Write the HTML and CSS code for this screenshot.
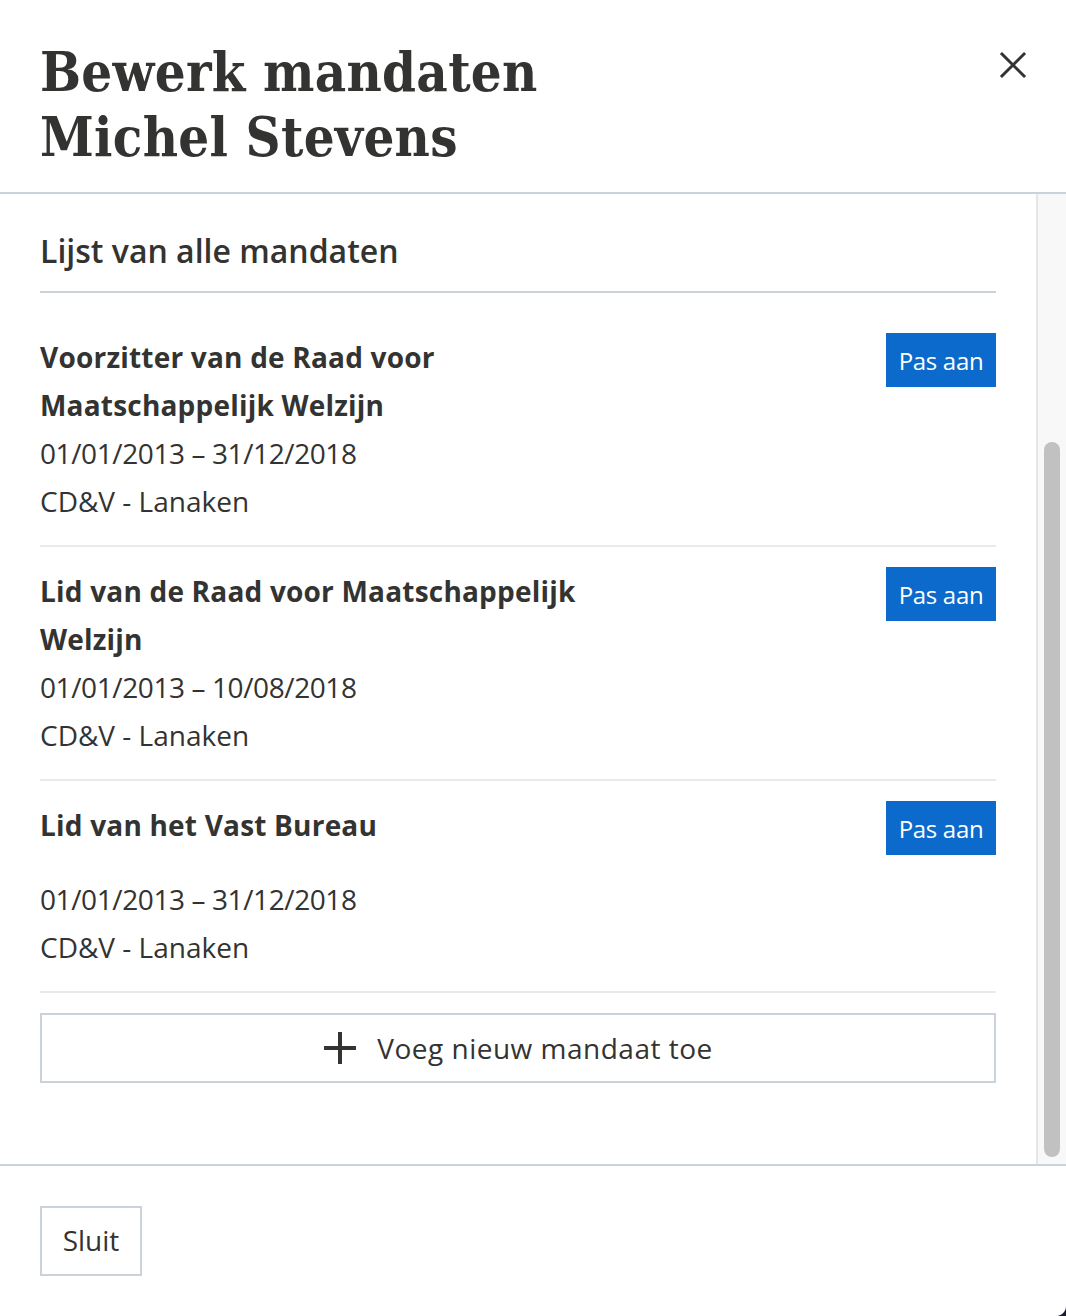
FILE: index.html
```html
<!DOCTYPE html>
<html lang="nl">
<head>
<meta charset="utf-8">
<title>Bewerk mandaten</title>
<link rel="stylesheet" href="styles.css">
</head>
<body>
<div class="modal">
  <header class="modal-header">
    <h1 class="modal-title">Bewerk mandaten<br>Michel Stevens</h1>
    <button class="close" aria-label="Sluit">
      <svg width="28" height="28" viewBox="0 0 28 28"><path d="M3 3 L25 25 M25 3 L3 25" stroke="#333332" stroke-width="3" stroke-linecap="square" fill="none"/></svg>
    </button>
  </header>
  <div class="modal-body">
    <div class="content">
      <h2 class="list-title">Lijst van alle mandaten</h2>
      <ul class="mandates">
        <li class="mandate">
          <div class="mandate-head">
            <div class="mandate-name">Voorzitter van de Raad voor Maatschappelijk Welzijn</div>
            <button class="btn-primary">Pas aan</button>
          </div>
          <div class="mandate-line">01/01/2013 – 31/12/2018</div>
          <div class="mandate-line">CD&amp;V - Lanaken</div>
        </li>
        <li class="mandate">
          <div class="mandate-head">
            <div class="mandate-name">Lid van de Raad voor Maatschappelijk Welzijn</div>
            <button class="btn-primary">Pas aan</button>
          </div>
          <div class="mandate-line">01/01/2013 – 10/08/2018</div>
          <div class="mandate-line">CD&amp;V - Lanaken</div>
        </li>
        <li class="mandate">
          <div class="mandate-head">
            <div class="mandate-name">Lid van het Vast Bureau</div>
            <button class="btn-primary">Pas aan</button>
          </div>
          <div class="mandate-line">01/01/2013 – 31/12/2018</div>
          <div class="mandate-line">CD&amp;V - Lanaken</div>
        </li>
      </ul>
      <button class="btn-add">
        <svg width="34" height="34" viewBox="0 0 34 34"><path d="M17 1 V33 M1 17 H33" stroke="#333332" stroke-width="4" fill="none"/></svg>
        <span>Voeg nieuw mandaat toe</span>
      </button>
    </div>
    <div class="scrollbar"><div class="thumb"></div></div>
  </div>
  <footer class="modal-footer">
    <button class="btn-secondary">Sluit</button>
  </footer>
  <div class="corner"></div>
</div>
</body>
</html>
```

FILE: styles.css
```css
* { box-sizing: border-box; }
html, body { margin: 0; padding: 0; background: #fff; }
body {
  font-family: "Open Sans", "Noto Sans", sans-serif;
  color: #333332;
}
.modal {
  position: relative;
  width: 1066px;
  height: 1316px;
  display: flex;
  flex-direction: column;
  background: #fff;
  overflow: hidden;
}
.modal-header {
  display: flex;
  justify-content: space-between;
  align-items: flex-start;
  padding: 40px 40px 20px 40px;
  border-bottom: 2px solid #cbd2da;
  height: 194px;
}
.modal-title {
  margin: 0;
  font-family: "DejaVu Serif Condensed", "DejaVu Serif", serif;
  font-weight: bold;
  font-size: 54px;
  line-height: 65px;
  letter-spacing: 0.3px;
  color: #333332;
}
.close {
  background: none;
  border: 0;
  padding: 0;
  margin: 11px -1px 0 0;
  width: 28px;
  height: 28px;
  cursor: pointer;
}
.close svg { display: block; }
.modal-body {
  flex: 1;
  display: flex;
  border-bottom: 2px solid #cbd2da;
  min-height: 0;
}
.content {
  flex: 1;
  padding: 0 40px;
}
.list-title {
  margin: 0;
  padding: 35px 0 18px;
  font-size: 32px;
  line-height: 44px;
  font-weight: 600;
  letter-spacing: 0;
  border-bottom: 2px solid #cbd2da;
}
.mandates {
  list-style: none;
  margin: 0;
  padding: 20px 0 0;
}
.mandate {
  padding: 20px 0 20px;
  border-bottom: 2px solid #e8ebee;
}
.mandate-head {
  display: flex;
  justify-content: space-between;
  align-items: flex-start;
}
.mandate-name {
  max-width: 590px;
  font-size: 28px;
  line-height: 48px;
  font-weight: 700;
  letter-spacing: 0.2px;
}
.mandate-line {
  font-size: 28px;
  line-height: 48px;
  letter-spacing: -0.4px;
}
.mandate-line + .mandate-line { letter-spacing: 0; }
.btn-primary {
  flex: none;
  width: 110px;
  height: 54px;
  margin-bottom: 20px;
  background: #0b6acb;
  color: #fff;
  border: 0;
  font-family: inherit;
  font-size: 24px;
  font-weight: 500;
  letter-spacing: -0.3px;
  padding: 0;
}
.btn-add {
  margin-top: 20px;
  width: 100%;
  height: 70px;
  display: flex;
  align-items: center;
  justify-content: center;
  gap: 20px;
  background: #fff;
  border: 2px solid #cbd2da;
  font-family: inherit;
  font-size: 28px;
  color: #333332;
  letter-spacing: 0.5px;
}
.btn-add svg { display: block; }
.scrollbar {
  width: 30px;
  flex: none;
  background: #f8f8f8;
  border-left: 2px solid #e6e6e6;
  padding: 248px 6px 7px 6px;
}
.thumb {
  width: 16px;
  height: 100%;
  background: #c1c1c1;
  border-radius: 8px;
}
.modal-footer {
  height: 150px;
  padding: 40px;
}
.btn-secondary {
  width: 102px;
  height: 70px;
  background: #fff;
  border: 2px solid #cbd2da;
  font-family: inherit;
  font-size: 28px;
  color: #333332;
  padding: 0 0 3px;
}
.corner {
  position: absolute;
  right: 0;
  bottom: 0;
  width: 10px;
  height: 10px;
  background: radial-gradient(circle at 0 0, transparent 9.5px, #1b1b2b 10.5px);
}
```
